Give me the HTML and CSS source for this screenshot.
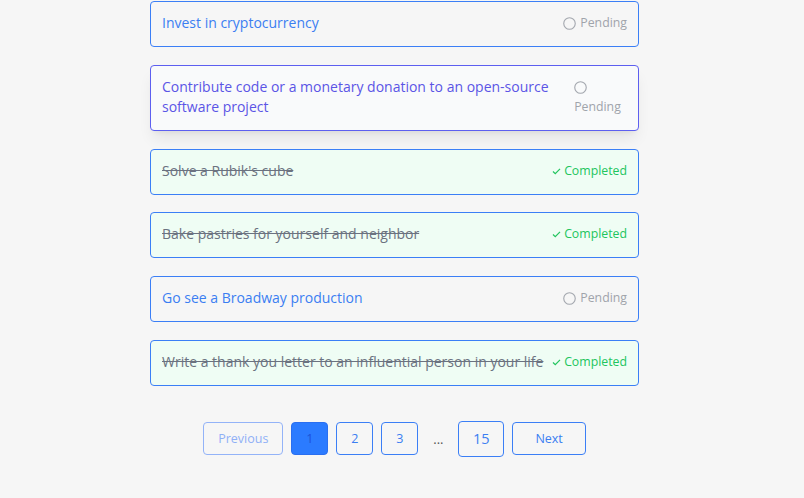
FILE: index.html
```html
<!DOCTYPE html>
<html lang="en">
<head>
<meta charset="utf-8">
<title>Bucket list</title>
<link rel="stylesheet" href="styles.css">
</head>
<body>
<main class="page">
  <ul class="tasks">
    <li class="task">
      <span class="task-title">Invest in cryptocurrency</span>
      <span class="status status-pending"><svg class="ico-circle" viewBox="0 0 14 14"><circle cx="7" cy="7" r="6.2" /></svg>Pending</span>
    </li>
    <li class="task task-hover">
      <span class="task-title">Contribute code or a monetary donation to an open-source software project</span>
      <span class="status status-pending"><svg class="ico-circle" viewBox="0 0 14 14"><circle cx="7" cy="7" r="6.2" /></svg>Pending</span>
    </li>
    <li class="task task-done">
      <span class="task-title">Solve a Rubik's cube</span>
      <span class="status status-done"><svg class="ico-check" viewBox="0 0 10 8"><polyline points="1,4 3.6,6.5 9,1" /></svg>Completed</span>
    </li>
    <li class="task task-done">
      <span class="task-title">Bake pastries for yourself and neighbor</span>
      <span class="status status-done"><svg class="ico-check" viewBox="0 0 10 8"><polyline points="1,4 3.6,6.5 9,1" /></svg>Completed</span>
    </li>
    <li class="task">
      <span class="task-title">Go see a Broadway production</span>
      <span class="status status-pending"><svg class="ico-circle" viewBox="0 0 14 14"><circle cx="7" cy="7" r="6.2" /></svg>Pending</span>
    </li>
    <li class="task task-done">
      <span class="task-title">Write a thank you letter to an influential person in your life</span>
      <span class="status status-done"><svg class="ico-check" viewBox="0 0 10 8"><polyline points="1,4 3.6,6.5 9,1" /></svg>Completed</span>
    </li>
  </ul>
  <nav class="pager">
    <button class="pg pg-prev" disabled>Previous</button>
    <button class="pg pg-num pg-active">1</button>
    <button class="pg pg-num">2</button>
    <button class="pg pg-num">3</button>
    <span class="pg-dots">...</span>
    <button class="pg pg-num pg-big">15</button>
    <button class="pg pg-next">Next</button>
  </nav>
</main>
</body>
</html>
```
FILE: styles.css
```css
html, body {
  margin: 0;
  padding: 0;
  background: #f6f6f6;
}
body {
  font-family: "Open Sans", "Noto Sans", sans-serif;
  font-size: 14px;
  line-height: 20px;
}
.page {
  width: 489px;
  margin-left: 150px;
  padding-top: 1px;
}
.tasks {
  list-style: none;
  margin: 0;
  padding: 0;
  display: flex;
  flex-direction: column;
  gap: 17.8px;
}
.task {
  display: flex;
  align-items: center;
  justify-content: space-between;
  border: 1px solid #3b7ff6;
  border-radius: 4px;
  padding: 11px 11px 13px 11px;
  background: #f6f6f6;
  color: #3b7ef2;
}
.task-hover {
  border-color: #5d5ff0;
  background: #f9fafb;
  color: #5b55e6;
  box-shadow: 0 10px 15px -3px rgba(0,0,0,0.08), 0 4px 6px -4px rgba(0,0,0,0.08);
}
.task-done {
  background: #effdf4;
}
.task-done .task-title {
  color: #6b7280;
  text-decoration: line-through;
}
.status {
  display: block;
  font-size: 12.3px;
}
.status-pending {
  color: #a0a4ab;
}
.status-done {
  color: #22c55e;
}
.ico-circle {
  width: 13px;
  height: 13px;
  vertical-align: -3px;
  margin-right: 4px;
  fill: none;
  stroke: #a3a7ae;
  stroke-width: 1.2;
}
.ico-check {
  width: 9px;
  height: 7px;
  vertical-align: 0;
  margin-right: 3px;
  fill: none;
  stroke: #22c55e;
  stroke-width: 1.4;
}
.pager {
  display: flex;
  align-items: center;
  justify-content: center;
  gap: 8px;
  margin-top: 35px;
}
.pg {
  font-family: inherit;
  font-size: 12.5px;
  line-height: 20px;
  height: 33px;
  padding: 0 14px;
  border: 1px solid #3b7ff6;
  border-radius: 4px;
  background: #f6f6f6;
  color: #3b7ef2;
}
.pg-prev {
  border-color: #93b3f8;
  color: #8fb0f6;
}
.pg-num {
  width: 37px;
  padding: 0;
}
.pg-active {
  background: #2b7bff;
  border-color: #2a6ff0;
  color: #1d52d8;
}
.pg-big {
  width: 46px;
  height: 36px;
  font-size: 14.5px;
}
.pg-next {
  padding: 0 22px;
}
.pg-dots {
  width: 24px;
  text-align: center;
  color: #555;
  font-size: 13px;
}
```
